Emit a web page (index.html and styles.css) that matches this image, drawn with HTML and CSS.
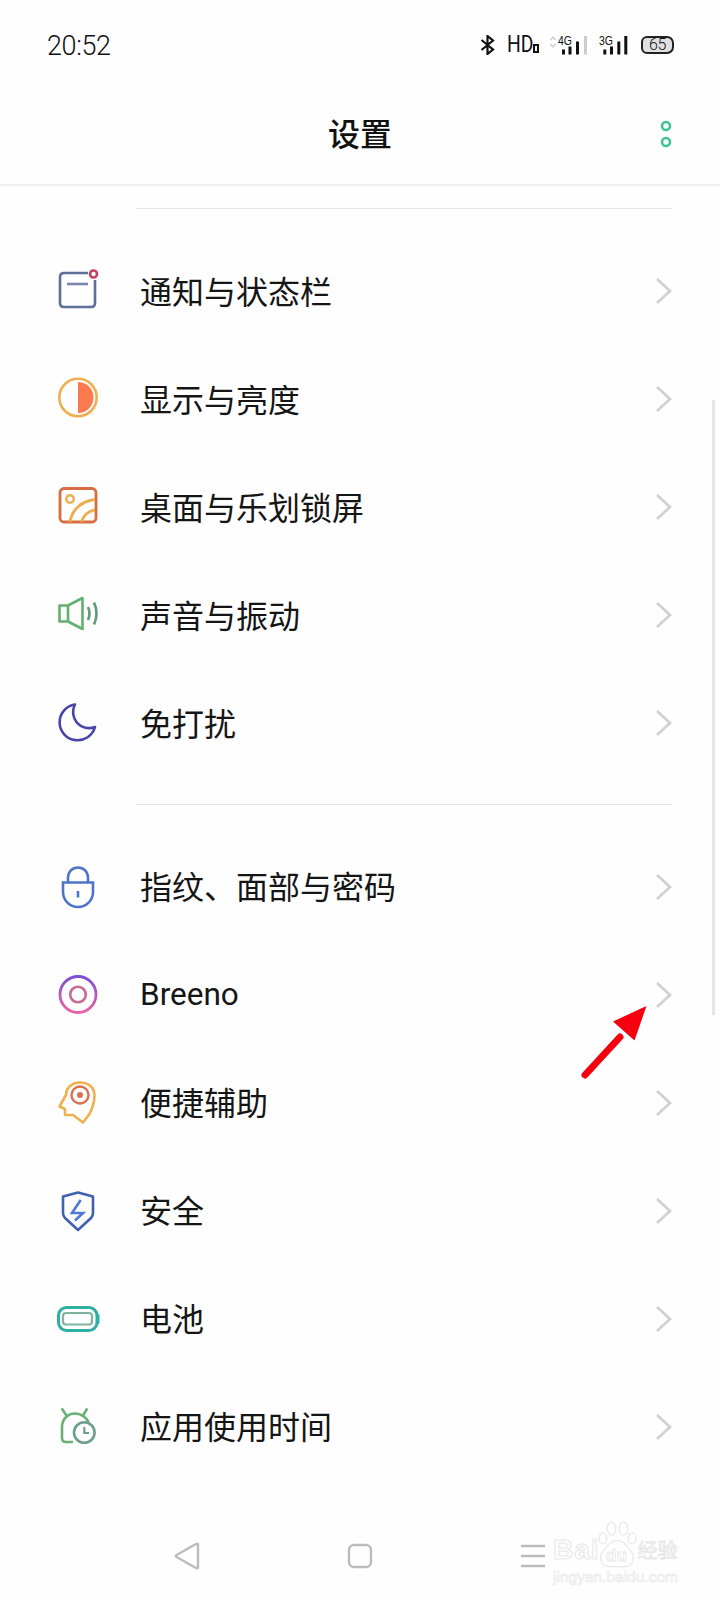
FILE: index.html
```html
<!DOCTYPE html>
<html lang="zh-CN">
<head>
<meta charset="utf-8">
<title>设置</title>
<link rel="stylesheet" href="styles.css">
</head>
<body>
<div class="app">
  <div class="status">
    <span class="time">20:52</span>
    <div class="status-icons">
      <svg class="st-bt" width="16" height="20" viewBox="0 0 16 20"><path d="M1.5 5 L13 14.5 L7.5 19 V1 L13 5.5 L1.5 15" fill="none" stroke="#111" stroke-width="2.2"/></svg>
      <span class="st-hd">HD</span>
      <span class="st-hdbox"></span>
      <svg class="st-sig1" width="40" height="20" viewBox="0 0 40 20">
        <path d="M1.500 5 L4 2 L6.500 5 M1.500 9 L4 12 L6.500 9" fill="none" stroke="#ccc" stroke-width="1.3"/>
        <text class="st-net" x="9" y="9.500" textLength="14" lengthAdjust="spacingAndGlyphs">4G</text>
        <rect x="13" y="14.500" width="3" height="5" fill="#111"/><rect x="19.500" y="11.500" width="3" height="8" fill="#111"/><rect x="27" y="6.500" width="3" height="13" fill="#111"/><rect x="35" y="1" width="3" height="18.500" fill="#ccc"/>
      </svg>
      <svg class="st-sig2" width="27" height="20" viewBox="0 0 27 20">
        <text class="st-net" x="0" y="9.500" textLength="14" lengthAdjust="spacingAndGlyphs">3G</text>
        <rect x="4.300" y="14.500" width="3" height="5" fill="#111"/><rect x="11" y="11.500" width="3" height="8" fill="#111"/><rect x="18.300" y="6.500" width="3" height="13" fill="#111"/><rect x="25.300" y="1" width="3" height="18.500" fill="#111"/>
      </svg>
      <span class="st-batt">65</span>
    </div>
  </div>

  <header class="header">
    <h1 class="title">设置</h1>
    <svg class="more" width="14" height="28" viewBox="0 0 14 28"><circle cx="7" cy="6" r="4" fill="none" stroke="#3fc48f" stroke-width="2.6"/><circle cx="7" cy="22" r="4" fill="none" stroke="#3fc48f" stroke-width="2.6"/></svg>
  </header>

  <main class="list">
    <section class="section">
      <div class="divider"></div>
      <div class="row">
        <svg class="ico" viewBox="0 0 44 44"><path d="M32 4 H8 Q4 4 4 8 V34 Q4 38 8 38 H35 Q39 38 39 34 V11" fill="none" stroke="#5f6f99" stroke-width="2.6"/><path d="M11 15 H32" stroke="#7a88b0" stroke-width="2.6"/><circle cx="37.500" cy="5" r="3.500" fill="#fff" stroke="#c8405f" stroke-width="2.6"/></svg>
        <span class="label">通知与状态栏</span>
        <svg class="chev" width="18" height="28" viewBox="0 0 18 28"><path d="M2 2 L15 14 L2 26" fill="none" stroke="#d0d0d0" stroke-width="2.6"/></svg>
      </div>
      <div class="row">
        <svg class="ico" viewBox="0 0 44 44"><circle cx="22" cy="20.500" r="18.700" fill="none" stroke="#efae50" stroke-width="2.6"/><path d="M22 5 A15.500 15.500 0 0 1 22 36 Z" fill="#fb7a50"/></svg>
        <span class="label">显示与亮度</span>
        <svg class="chev" width="18" height="28" viewBox="0 0 18 28"><path d="M2 2 L15 14 L2 26" fill="none" stroke="#d0d0d0" stroke-width="2.6"/></svg>
      </div>
      <div class="row">
        <svg class="ico" viewBox="0 0 44 44"><rect x="4" y="3.500" width="36" height="33.500" rx="4" fill="none" stroke="#d96d42" stroke-width="2.8"/><circle cx="14" cy="14" r="3.800" fill="none" stroke="#eeb055" stroke-width="2.600"/><path d="M14 37 C16 24 26 16 39 14.500 M25.500 37 C27 31 32 26 39 25" fill="none" stroke="#eeac4e" stroke-width="2.800"/></svg>
        <span class="label">桌面与乐划锁屏</span>
        <svg class="chev" width="18" height="28" viewBox="0 0 18 28"><path d="M2 2 L15 14 L2 26" fill="none" stroke="#d0d0d0" stroke-width="2.6"/></svg>
      </div>
      <div class="row">
        <svg class="ico" viewBox="0 0 44 44"><path d="M3.500 12.500 H12 L26.500 5 V36 L12 28.500 H3.500 Z M12 12.500 V28.500" fill="none" stroke="#62b070" stroke-width="2.6" stroke-linejoin="round"/><path d="M32 14 Q35 20.500 32 27 M38 9.500 Q43 20.500 38 31.500" fill="none" stroke="#5c9a78" stroke-width="2.6"/></svg>
        <span class="label">声音与振动</span>
        <svg class="chev" width="18" height="28" viewBox="0 0 18 28"><path d="M2 2 L15 14 L2 26" fill="none" stroke="#d0d0d0" stroke-width="2.6"/></svg>
      </div>
      <div class="row">
        <svg class="ico" viewBox="0 0 44 44"><path d="M19 3.500 A18 18 0 1 0 39 26 A16 16 0 0 1 19 3.500 Z" fill="none" stroke="#4a45a8" stroke-width="2.6" stroke-linejoin="round"/></svg>
        <span class="label">免打扰</span>
        <svg class="chev" width="18" height="28" viewBox="0 0 18 28"><path d="M2 2 L15 14 L2 26" fill="none" stroke="#d0d0d0" stroke-width="2.6"/></svg>
      </div>
    </section>

    <section class="section">
      <div class="divider"></div>
      <div class="row">
        <svg class="ico" viewBox="0 0 44 44"><path d="M7 17.500 H37 V27 A15 15 0 0 1 7 27 Z M12 17.500 V12.500 A10 10 0 0 1 32 12.500 V17.500" fill="none" stroke="#4d74c9" stroke-width="2.6"/><path d="M22 26 V32.500" stroke="#4d74c9" stroke-width="2.6"/></svg>
        <span class="label">指纹、面部与密码</span>
        <svg class="chev" width="18" height="28" viewBox="0 0 18 28"><path d="M2 2 L15 14 L2 26" fill="none" stroke="#d0d0d0" stroke-width="2.6"/></svg>
      </div>
      <div class="row">
        <svg class="ico" viewBox="0 0 44 44"><defs><linearGradient id="br" x1="0" y1="0" x2="0" y2="1"><stop offset="0" stop-color="#7b4fd8"/><stop offset="1" stop-color="#ec62a0"/></linearGradient></defs><circle cx="22" cy="21.500" r="18" fill="none" stroke="url(#br)" stroke-width="2.8"/><circle cx="22" cy="21.500" r="7.800" fill="none" stroke="#c86a90" stroke-width="2.6"/></svg>
        <span class="label label-latin">Breeno</span>
        <svg class="chev" width="18" height="28" viewBox="0 0 18 28"><path d="M2 2 L15 14 L2 26" fill="none" stroke="#d0d0d0" stroke-width="2.6"/></svg>
      </div>
      <div class="row">
        <svg class="ico" viewBox="0 0 44 44"><path d="M27 41.500 L33.500 33 C36 28 38.500 22 38.500 14.500 C38.500 6 32 1.500 24 1.500 C15 1.500 10 8 10 14 L3.500 25.500 L9 28 V34 H17 Z" fill="none" stroke="#efb050" stroke-width="2.6" stroke-linejoin="round"/><circle cx="24" cy="14" r="8.500" fill="none" stroke="#d9704f" stroke-width="2.4"/><circle cx="24" cy="14" r="3" fill="#d9704f"/></svg>
        <span class="label">便捷辅助</span>
        <svg class="chev" width="18" height="28" viewBox="0 0 18 28"><path d="M2 2 L15 14 L2 26" fill="none" stroke="#d0d0d0" stroke-width="2.6"/></svg>
      </div>
      <div class="row">
        <svg class="ico" viewBox="0 0 44 44"><path d="M22 3.500 L37 7.500 V24 Q37 27 35 29 L22 41 L9 29 Q7 27 7 24 V7.500 Z" fill="none" stroke="#3f62b0" stroke-width="2.6" stroke-linejoin="round"/><path d="M24.700 11 L16 24 H27 L19 31.500" fill="none" stroke="#4f78d8" stroke-width="2.6"/></svg>
        <span class="label">安全</span>
        <svg class="chev" width="18" height="28" viewBox="0 0 18 28"><path d="M2 2 L15 14 L2 26" fill="none" stroke="#d0d0d0" stroke-width="2.6"/></svg>
      </div>
      <div class="row">
        <svg class="ico" viewBox="0 0 44 44"><rect x="2.500" y="10.500" width="38.500" height="23" rx="8" fill="none" stroke="#2fb0a4" stroke-width="3"/><path d="M41 17 H42 Q43.500 17 43.500 18.500 V25.500 Q43.500 27 42 27 H41 Z" fill="#2fb0a4"/><rect x="7" y="16" width="29" height="11.500" rx="3" fill="none" stroke="#7fb39c" stroke-width="2.200"/></svg>
        <span class="label">电池</span>
        <svg class="chev" width="18" height="28" viewBox="0 0 18 28"><path d="M2 2 L15 14 L2 26" fill="none" stroke="#d0d0d0" stroke-width="2.6"/></svg>
      </div>
      <div class="row">
        <svg class="ico" viewBox="0 0 44 44"><path d="M17 37 H10 Q6 37 6 33 V22 C6 14 12 8.500 19 8.500 C26 8.500 32 14 32.500 18 M5.700 3.300 L10.700 11 M31.300 3.300 L26.700 11" fill="none" stroke="#6bb077" stroke-width="2.6"/><circle cx="28.300" cy="27.500" r="10.300" fill="#fff" stroke="#6f9f8e" stroke-width="2.6"/><path d="M28.300 22 V28 H33" fill="none" stroke="#6f9f8e" stroke-width="2.2"/></svg>
        <span class="label">应用使用时间</span>
        <svg class="chev" width="18" height="28" viewBox="0 0 18 28"><path d="M2 2 L15 14 L2 26" fill="none" stroke="#d0d0d0" stroke-width="2.6"/></svg>
      </div>
    </section>
  </main>

  <nav class="nav">
    <svg class="nav-ico" width="28" height="28" viewBox="0 0 28 28"><path d="M25 2.500 V25.500 Q25 27 23 26 L3.500 15 Q2 14 3.500 13 L23 2 Q25 1 25 2.500 Z" fill="none" stroke="#bcbcbc" stroke-width="2.4" stroke-linejoin="round"/></svg>
    <svg class="nav-ico" width="28" height="28" viewBox="0 0 28 28"><rect x="3" y="3" width="22" height="22" rx="5" fill="none" stroke="#bcbcbc" stroke-width="2.4"/></svg>
    <svg class="nav-ico" width="28" height="28" viewBox="0 0 28 28"><path d="M2 4 H26 M2 14 H26 M2 24 H26" stroke="#bcbcbc" stroke-width="2.4"/></svg>
  </nav>

  <div class="scrollbar"></div>

  <svg class="arrow" width="70" height="76" viewBox="0 0 70 76"><path d="M5 71 L40 33" stroke="#f60010" stroke-width="7" stroke-linecap="round"/><path d="M66.500 2 L33 17.500 L54.500 36.500 Z" fill="#f60010"/></svg>

  <div class="watermark">
    <div class="wm-top">
      <span class="wm-bai">Bai</span>
      <svg class="wm-paw" width="42" height="50" viewBox="0 0 38 46"><g fill="none" stroke="#e8e8e8" stroke-width="1.100"><ellipse cx="6" cy="16" rx="3.500" ry="5"/><ellipse cx="14" cy="7" rx="4" ry="6"/><ellipse cx="25" cy="7" rx="4" ry="6"/><ellipse cx="33" cy="16" rx="3.500" ry="5"/><path d="M19 18 C12 18 10 24 6 28 C2 33 4 42 12 42 C16 42 22 42 26 42 C34 42 36 33 32 28 C28 24 26 18 19 18 Z"/></g></svg>
      <span class="wm-du">du</span>
      <span class="wm-cn">经验</span>
    </div>
    <div class="wm-url">jingyan.baidu.com</div>
  </div>
</div>
</body>
</html>
```
FILE: styles.css
```css
* { box-sizing: border-box; }
html, body { margin: 0; padding: 0; background: #fefefe; }
body { font-family: "Noto Sans CJK SC", "Noto Sans", sans-serif; color: #111; }
.app { position: relative; width: 720px; height: 1600px; overflow: hidden; display: flex; flex-direction: column; }

.status { height: 88px; display: flex; align-items: center; justify-content: space-between; padding: 0 46px 0 47px; }
.time { padding-top: 3px; font-family: Roboto, sans-serif; font-weight: 300; font-size: 27px; letter-spacing: -0.4px; color: #111; }
.status-icons { display: flex; align-items: center; height: 20px; margin-top: 1px; }
.st-bt { display: block; margin-right: 11px; }
.st-hd { font-family: "Roboto", sans-serif; font-size: 23px; line-height: 20px; transform: scaleX(0.84); transform-origin: left center; width: 26px; color: #111; }
.st-hdbox { width: 6px; height: 9px; border: 2px solid #111; margin: 7px 10px 0 0; }
.st-sig1 { display: block; margin-right: 10px; overflow: visible; }
.st-sig2 { display: block; margin-right: 15px; overflow: visible; }
.st-net { font-family: "Liberation Sans", sans-serif; font-size: 12.500px; font-weight: 400; fill: #111; }
.st-batt { width: 33px; height: 18px; border: 2px solid #222; border-radius: 6px 7px 7px 6px; background: #e0e0e0; font-family: Roboto, sans-serif; font-weight: 300; font-size: 16px; line-height: 14px; letter-spacing: -0.3px; text-align: center; color: #111; }

.header { height: 98px; padding: 0 47px 8px; display: flex; align-items: center; justify-content: center; position: relative; border-bottom: 2px solid #f0f0f0; }
.title { margin: 0; font-size: 32px; font-weight: 500; line-height: 44px; }
.more { position: absolute; right: 47px; top: 32px; }

.list { padding-top: 22px; }
.section + .section { margin-top: 27px; }
.divider { height: 1px; background: #e6e6e6; margin: 0 48px 28px 136px; }
.row { height: 108px; display: flex; align-items: center; padding: 0 47px 0 56px; }
.ico { width: 44px; height: 44px; flex: none; display: block; }
.label { flex: 1; margin-left: 40px; padding-bottom: 2px; font-size: 32px; line-height: 44px; font-weight: 400; color: #151515; }
.section + .section .label { padding-bottom: 4px; }
.section + .section .label-latin { font-family: Roboto, sans-serif; font-size: 31.500px; padding-bottom: 0; }
.chev { flex: none; display: block; }

.nav { margin-top: auto; height: 88px; padding-left: 100px; display: grid; grid-template-columns: repeat(3, 173px); align-items: center; justify-items: center; }
.nav-ico { display: block; }

.scrollbar { position: absolute; left: 712px; top: 400px; width: 3px; height: 615px; background: #e6e6e6; }
.arrow { position: absolute; left: 580px; top: 1004px; }

.watermark { position: absolute; left: 553px; top: 1530px; width: 130px; color: #fff; }
.wm-top { display: flex; align-items: center; height: 40px; }
.wm-bai { font-family: "Liberation Sans", sans-serif; font-weight: 700; font-size: 28px; letter-spacing: 1px; color: #fdfdfd; -webkit-text-stroke: 1px #e8e8e8; }
.wm-paw { flex: none; margin: -8px 0 0 -4px; }
.wm-du { position: absolute; left: 53px; top: 16px; font-family: "Liberation Sans", sans-serif; font-weight: 700; font-size: 17px; color: #fdfdfd; -webkit-text-stroke: 0.8px #e8e8e8; }
.wm-cn { margin-left: 0; font-size: 20px; line-height: 24px; white-space: nowrap; color: #fdfdfd; -webkit-text-stroke: 0.8px #e4e4e4; }
.wm-url { margin-top: -2px; font-family: "Liberation Sans", sans-serif; font-size: 15.500px; white-space: nowrap; color: #fdfdfd; -webkit-text-stroke: 0.7px #eaeaea; }
```
